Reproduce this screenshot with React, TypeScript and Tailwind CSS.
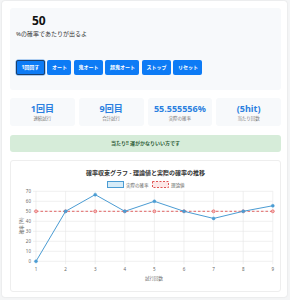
import React from "react";

const buttons = ["1回回す", "オート", "鬼オート", "超鬼オート", "ストップ", "リセット"];

const stats = [
  { value: "1回目", label: "連続試行" },
  { value: "9回目", label: "合計試行" },
  { value: "55.555556%", label: "実際の確率" },
  { value: "(5hit)", label: "当たり回数" },
];

// actual probability after each trial
const actual = [0, 50, 66.67, 50, 60, 50, 42.86, 50, 55.56];

const ChartSvg = () => {
  // coordinates are local to the svg (page x - 10, page y - 180)
  const x0 = 25;
  const step = 29.6;
  const yAt = (v: number) => 84.3 - v;
  const xAt = (i: number) => x0 + i * step;
  const pts = actual.map((v, i) => `${xAt(i)},${yAt(v)}`).join(" ");

  return (
    <svg width="271" height="112" viewBox="0 0 271 112" className="block">
      {/* legend */}
      <rect x="96.5" y="4.5" width="16" height="6" fill="#d6ecf8" stroke="#4b9cd3" strokeWidth="1" />
      <text x="115" y="9.5" fontSize="4.5" fill="#666">実際の確率</text>
      <rect x="141.5" y="4.5" width="16" height="6" fill="#fde8e8" stroke="#e05555" strokeWidth="1" strokeDasharray="2 1.5" />
      <text x="160" y="9.5" fontSize="4.5" fill="#666">理論値</text>

      {/* grid */}
      {[0, 10, 20, 30, 40, 50, 60, 70].map((v) => (
        <g key={v}>
          <line x1={x0 - 3} x2={xAt(8)} y1={yAt(v)} y2={yAt(v)} stroke="#e6e6e6" strokeWidth="0.6" />
          <text x={x0 - 5} y={yAt(v) + 1.6} fontSize="4.5" fill="#666" textAnchor="end">{v}</text>
        </g>
      ))}
      {actual.map((_, i) => (
        <g key={i}>
          <line x1={xAt(i)} x2={xAt(i)} y1={yAt(70)} y2={yAt(0) + 3} stroke="#e6e6e6" strokeWidth="0.6" />
          <text x={xAt(i)} y={yAt(0) + 9.5} fontSize="4.5" fill="#666" textAnchor="middle">{i + 1}</text>
        </g>
      ))}

      {/* axis titles */}
      <text x="143" y="103" fontSize="4.5" fill="#666" textAnchor="middle">試行回数</text>
      <text transform="translate(12 49) rotate(-90)" fontSize="4.5" fill="#666" textAnchor="middle">確率 (%)</text>

      {/* theoretical */}
      <line x1={xAt(0)} x2={xAt(8)} y1={yAt(50)} y2={yAt(50)} stroke="#e05555" strokeWidth="0.9" strokeDasharray="2.5 2" />
      {actual.map((_, i) => (
        <circle key={i} cx={xAt(i)} cy={yAt(50)} r="1.5" fill="#f5b5b5" stroke="#e05555" strokeWidth="0.6" />
      ))}

      {/* actual */}
      <polyline points={pts} fill="none" stroke="#4b9cd3" strokeWidth="1" />
      {actual.map((v, i) => (
        <circle key={i} cx={xAt(i)} cy={yAt(v)} r="1.5" fill="#4b9cd3" stroke="#4b9cd3" strokeWidth="0.5" />
      ))}
    </svg>
  );
};

const App = () => {
  return (
    <div
      className="h-[300px] w-[290px] bg-[#f4f5f6] pl-[2px] pr-[3px] pt-[1px]"
      style={{ fontFamily: "'Noto Sans', 'Noto Sans CJK JP', sans-serif" }}
    >
      <div className="h-[296px] rounded-[3px] bg-white pt-[7px] pl-[8px] pr-[6px] shadow-[0_0_2px_rgba(0,0,0,0.12)]">
        {/* settings panel */}
        <div className="h-[82px] rounded-[3px] bg-[#f7f9fb] pl-[6px] pt-[6px]">
          <div className="pl-[16px] text-[12px] font-bold leading-[14px] text-[#111]">50</div>
          <p className="mt-[0px] text-[6px] leading-[12px] text-[#333]">%の確率であたりが出るよ</p>
          <div className="mt-[20px] flex gap-[2.5px]">
            {buttons.map((label, i) => (
              <button
                key={label}
                className={`h-[15px] rounded-[2px] bg-[#0d7bf5] px-[4.5px] text-[5px] font-bold leading-none text-white ${
                  i === 0 ? "border border-[#1b3f6b] shadow-[0_0_0_0.5px_#6aa6e8]" : ""
                }`}
              >
                {label}
              </button>
            ))}
          </div>
        </div>

        {/* stats */}
        <div className="mt-[8px] flex gap-[4px]">
          {stats.map((s) => (
            <div key={s.label} className="flex h-[28px] w-[64.75px] flex-col items-center justify-center rounded-[3px] bg-[#f7f9fb]">
              <span className="text-[9px] font-bold leading-[11px] text-[#2a7fe0]">{s.value}</span>
              <span className="mt-[1px] text-[4.5px] leading-[6px] text-[#777]">{s.label}</span>
            </div>
          ))}
        </div>

        {/* alert */}
        <div className="mt-[9px] flex h-[17px] items-center justify-center rounded-[3px] bg-[#d6ecd9] text-[5px] font-bold text-[#2d5a36]">
          当たり!! 運がかなりいい方です
        </div>

        {/* chart */}
        <div className="mt-[8px] h-[132px] rounded-[3px] border border-[#eeeeee] bg-white">
          <div className="pt-[8px] text-center text-[6px] font-bold leading-[8px] text-[#333]">
            確率収束グラフ - 理論値と実際の確率の推移
          </div>
          <ChartSvg />
        </div>
      </div>
    </div>
  );
};

export default App;
